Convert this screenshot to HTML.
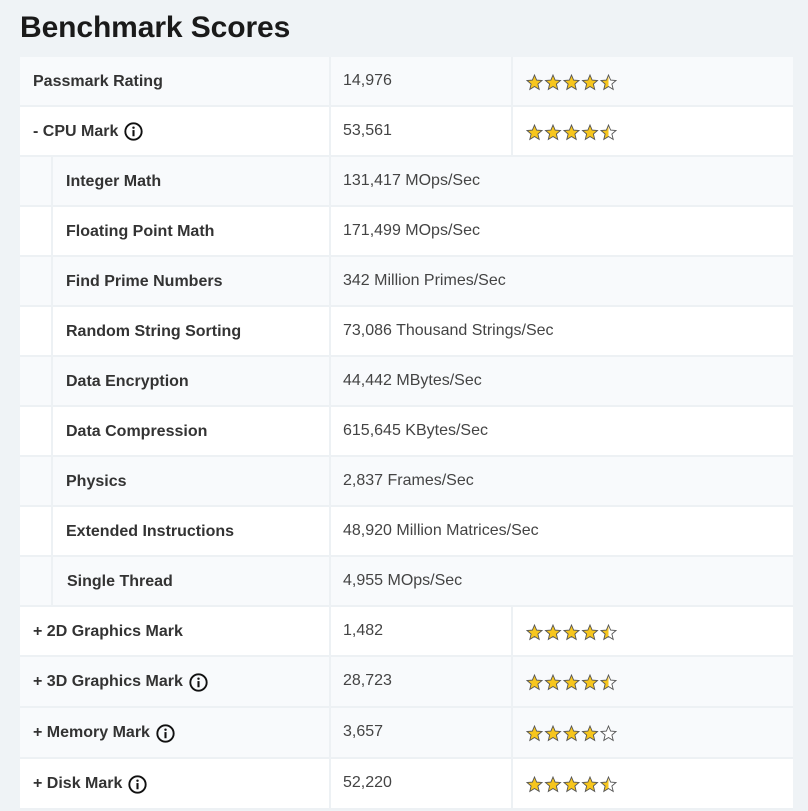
<!DOCTYPE html>
<html><head><meta charset="utf-8"><style>
body{margin:0;width:808px;height:811px;background:#eff3f6;font-family:"Liberation Sans",Arial,sans-serif;position:relative;overflow:hidden}
h1{position:absolute;left:20px;top:11px;margin:0;font-size:30px;font-weight:bold;color:#1a1a1a;letter-spacing:-0.1px}
.r{position:absolute;left:20px;width:773px;box-sizing:border-box;border-bottom:2px solid #edf1f4}
.r.a{background:#f8fafc}.r.b{background:#fff}
.c{position:absolute;top:0;bottom:0;display:flex;align-items:center;font-size:16px;box-sizing:border-box}
.l{left:0;width:311px;padding-left:13px;font-weight:bold;color:#333;border-right:2px solid #edf1f4;padding-top:1px}
.l.s{padding-left:46px}
.l.s:before{content:"";position:absolute;left:31px;top:0;bottom:-2px;width:2px;background:#edf1f4}
.v{left:311px;padding-left:12px;color:#444;padding-bottom:1px}
.v.n{width:182px;border-right:2px solid #edf1f4}
.st{left:493px;padding-left:13px;padding-top:3px}
.i{display:inline-block;width:19px;height:19px;margin-left:6px;vertical-align:middle}
</style></head><body>
<svg width="0" height="0" style="position:absolute"><defs>
<path id="sp" d="M8.5 1 L10.6 6.1 L16 6.5 L11.9 10 L13.2 15.4 L8.5 12.5 L3.8 15.4 L5.1 10 L1 6.5 L6.4 6.1 Z"/>
<linearGradient id="h"><stop offset="50%" stop-color="#f7c61d"/><stop offset="50%" stop-color="#fff"/></linearGradient>
<symbol id="info" viewBox="0 0 20 20"><circle cx="10" cy="10" r="8.6" fill="none" stroke="#111" stroke-width="2"/><circle cx="10" cy="6" r="1.3" fill="#111"/><rect x="8.9" y="8.5" width="2.2" height="6.5" fill="#111"/></symbol>
</defs></svg>
<h1>Benchmark Scores</h1>

<div class="r a" style="top:57px;height:50px"><div class="c l">Passmark Rating</div><div class="c v n">14,976</div><div class="c st"><svg width="92" height="18"><g stroke="#555" stroke-width="0.9"><use href="#sp" fill="#f7c61d"/><use href="#sp" x="18.5" fill="#f7c61d"/><use href="#sp" x="37" fill="#f7c61d"/><use href="#sp" x="55.5" fill="#f7c61d"/><use href="#sp" x="74" fill="url(#h)"/></g></svg></div></div>
<div class="r b" style="top:107px;height:50px"><div class="c l">- CPU Mark<svg class="i"><use href="#info"/></svg></div><div class="c v n">53,561</div><div class="c st"><svg width="92" height="18"><g stroke="#555" stroke-width="0.9"><use href="#sp" fill="#f7c61d"/><use href="#sp" x="18.5" fill="#f7c61d"/><use href="#sp" x="37" fill="#f7c61d"/><use href="#sp" x="55.5" fill="#f7c61d"/><use href="#sp" x="74" fill="url(#h)"/></g></svg></div></div>
<div class="r a" style="top:157px;height:50px"><div class="c l s">Integer Math</div><div class="c v">131,417 MOps/Sec</div></div>
<div class="r b" style="top:207px;height:50px"><div class="c l s">Floating Point Math</div><div class="c v">171,499 MOps/Sec</div></div>
<div class="r a" style="top:257px;height:50px"><div class="c l s">Find Prime Numbers</div><div class="c v">342 Million Primes/Sec</div></div>
<div class="r b" style="top:307px;height:50px"><div class="c l s">Random String Sorting</div><div class="c v">73,086 Thousand Strings/Sec</div></div>
<div class="r a" style="top:357px;height:50px"><div class="c l s">Data Encryption</div><div class="c v">44,442 MBytes/Sec</div></div>
<div class="r b" style="top:407px;height:50px"><div class="c l s">Data Compression</div><div class="c v">615,645 KBytes/Sec</div></div>
<div class="r a" style="top:457px;height:50px"><div class="c l s">Physics</div><div class="c v">2,837 Frames/Sec</div></div>
<div class="r b" style="top:507px;height:50px"><div class="c l s">Extended Instructions</div><div class="c v">48,920 Million Matrices/Sec</div></div>
<div class="r a" style="top:557px;height:50px"><div class="c l s" style="padding-left:47px">Single Thread</div><div class="c v">4,955 MOps/Sec</div></div>
<div class="r b" style="top:607px;height:50px"><div class="c l">+ 2D Graphics Mark</div><div class="c v n">1,482</div><div class="c st"><svg width="92" height="18"><g stroke="#555" stroke-width="0.9"><use href="#sp" fill="#f7c61d"/><use href="#sp" x="18.5" fill="#f7c61d"/><use href="#sp" x="37" fill="#f7c61d"/><use href="#sp" x="55.5" fill="#f7c61d"/><use href="#sp" x="74" fill="url(#h)"/></g></svg></div></div>
<div class="r a" style="top:657px;height:51px"><div class="c l">+ 3D Graphics Mark<svg class="i"><use href="#info"/></svg></div><div class="c v n">28,723</div><div class="c st"><svg width="92" height="18"><g stroke="#555" stroke-width="0.9"><use href="#sp" fill="#f7c61d"/><use href="#sp" x="18.5" fill="#f7c61d"/><use href="#sp" x="37" fill="#f7c61d"/><use href="#sp" x="55.5" fill="#f7c61d"/><use href="#sp" x="74" fill="url(#h)"/></g></svg></div></div>
<div class="r a" style="top:708px;height:51px"><div class="c l">+ Memory Mark<svg class="i"><use href="#info"/></svg></div><div class="c v n">3,657</div><div class="c st"><svg width="92" height="18"><g stroke="#555" stroke-width="0.9"><use href="#sp" fill="#f7c61d"/><use href="#sp" x="18.5" fill="#f7c61d"/><use href="#sp" x="37" fill="#f7c61d"/><use href="#sp" x="55.5" fill="#f7c61d"/><use href="#sp" x="74" fill="#fff"/></g></svg></div></div>
<div class="r b" style="top:759px;height:51px"><div class="c l">+ Disk Mark<svg class="i"><use href="#info"/></svg></div><div class="c v n">52,220</div><div class="c st"><svg width="92" height="18"><g stroke="#555" stroke-width="0.9"><use href="#sp" fill="#f7c61d"/><use href="#sp" x="18.5" fill="#f7c61d"/><use href="#sp" x="37" fill="#f7c61d"/><use href="#sp" x="55.5" fill="#f7c61d"/><use href="#sp" x="74" fill="url(#h)"/></g></svg></div></div>
</body></html>
